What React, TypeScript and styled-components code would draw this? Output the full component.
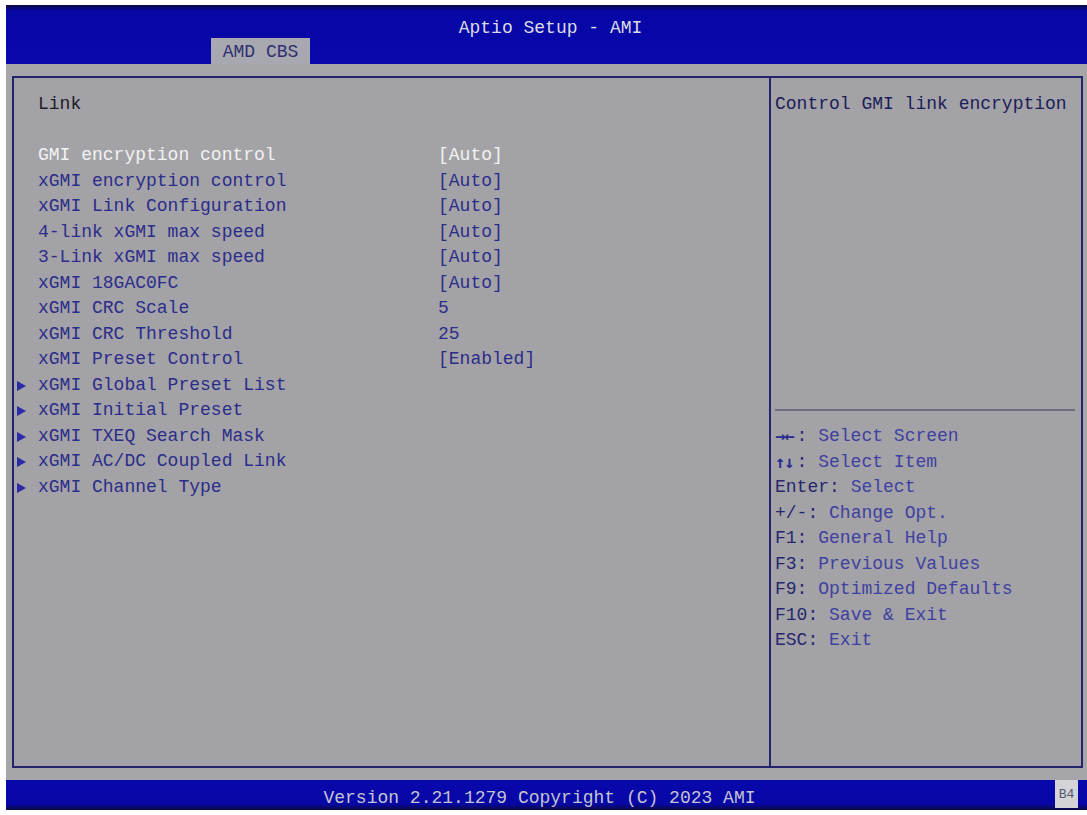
import React from "react";
import styled, { createGlobalStyle } from "styled-components";

const items = [
  { label: "GMI encryption control", value: "[Auto]", selected: true },
  { label: "xGMI encryption control", value: "[Auto]" },
  { label: "xGMI Link Configuration", value: "[Auto]" },
  { label: "4-link xGMI max speed", value: "[Auto]" },
  { label: "3-Link xGMI max speed", value: "[Auto]" },
  { label: "xGMI 18GAC0FC", value: "[Auto]" },
  { label: "xGMI CRC Scale", value: "5" },
  { label: "xGMI CRC Threshold", value: "25" },
  { label: "xGMI Preset Control", value: "[Enabled]" },
  { label: "xGMI Global Preset List", sub: true },
  { label: "xGMI Initial Preset", sub: true },
  { label: "xGMI TXEQ Search Mask", sub: true },
  { label: "xGMI AC/DC Coupled Link", sub: true },
  { label: "xGMI Channel Type", sub: true },
];

// arrows are drawn in a separate font, the others are plain text
const keys = [
  { k: "→←", d: "Select Screen", glyph: true },
  { k: "↑↓", d: "Select Item", glyph: true },
  { k: "Enter", d: "Select" },
  { k: "+/-", d: "Change Opt." },
  { k: "F1", d: "General Help" },
  { k: "F3", d: "Previous Values" },
  { k: "F9", d: "Optimized Defaults" },
  { k: "F10", d: "Save & Exit" },
  { k: "ESC", d: "Exit" },
];

const App = () => {
  return (
    <>
      <GlobalStyle />
      <Screen>
        <TopBar>
          <Title>Aptio Setup - AMI</Title>
          <TabRow>
            <Tab>AMD CBS</Tab>
          </TabRow>
        </TopBar>
        <Middle>
          <Panel>
            <MainPane>
              <Heading>Link</Heading>
              <Blank />
              {items.map((it) => (
                <Row key={it.label} $selected={it.selected}>
                  {it.sub && <Arrow />}
                  <Label>{it.label}</Label>
                  {it.value && <Value>{it.value}</Value>}
                </Row>
              ))}
            </MainPane>
            <HelpPane>
              <HelpText>Control GMI link encryption</HelpText>
              <Separator />
              <KeyList>
                {keys.map((it) => (
                  <KeyLine key={it.k}>
                    <KeyName $glyph={it.glyph}>{it.k}</KeyName>
                    <KeyName>:</KeyName> {it.d}
                  </KeyLine>
                ))}
              </KeyList>
            </HelpPane>
          </Panel>
        </Middle>
        <Footer>
          <FooterText>Version 2.21.1279 Copyright (C) 2023 AMI</FooterText>
          <Code>B4</Code>
        </Footer>
      </Screen>
    </>
  );
};

const GlobalStyle = createGlobalStyle`
  html, body {
    margin: 0;
    padding: 0;
    background: #ffffff;
  }
  body {
    font-family: "Liberation Mono", "DejaVu Sans Mono", monospace;
    font-size: 18px;
  }
`;

const Screen = styled.div`
  margin: 5px 0 5px 6px;
  width: 1081px;
  height: 805px;
  display: flex;
  flex-direction: column;
  background: #a6a6aa;
`;

const TopBar = styled.div`
  height: 59px;
  display: flex;
  flex-direction: column;
  background: linear-gradient(#0a0a40 0px, #0707a6 6px, #0808ac 100%);
`;

const Title = styled.div`
  height: 22px;
  padding-top: 11px;
  line-height: 24px;
  text-align: center;
  color: #dcdce4;
  padding-left: 8px;
`;

const TabRow = styled.div`
  flex: 1;
  display: flex;
  align-items: flex-end;
  padding-left: 205px;
`;

const Tab = styled.div`
  width: 99px;
  height: 26px;
  line-height: 28px;
  text-align: center;
  background: #a8a8b0;
  color: #303070;
`;

const Middle = styled.div`
  flex: 1;
  padding: 12px 4px 12px 6px;
  display: flex;
`;

const Panel = styled.div`
  flex: 1;
  display: grid;
  grid-template-columns: 755px 1fr;
  border: 2px solid #24246e;
  background: #a3a3a7;
`;

const MainPane = styled.div`
  padding: 14px 0 0 24px;
  line-height: 25.5px;
`;

const Heading = styled.div`
  color: #202028;
`;

const Blank = styled.div`
  height: 25.5px;
`;

const Row = styled.div<{ $selected?: boolean }>`
  position: relative;
  display: flex;
  color: ${(p) => (p.$selected ? "#f2f2f2" : "#2c2c8a")};
`;

const Arrow = styled.span`
  position: absolute;
  left: -21px;
  top: 8px;
  width: 0;
  height: 0;
  border-top: 5px solid transparent;
  border-bottom: 5px solid transparent;
  border-left: 9px solid #2a2aa8;
`;

const Label = styled.span`
  width: 400px;
  white-space: pre;
`;

const Value = styled.span`
  white-space: pre;
`;

const HelpPane = styled.div`
  border-left: 2px solid #24246e;
  padding: 14px 4px 0 4px;
  display: flex;
  flex-direction: column;
  line-height: 25.5px;
`;

const HelpText = styled.div`
  height: 317px;
  color: #1c1c58;
  white-space: pre;
`;

const Separator = styled.div`
  height: 2px;
  background: #6e6e80;
  margin-right: 2px;
`;

const KeyList = styled.div`
  padding-top: 13px;
  color: #4040a0;
`;

const KeyLine = styled.div`
  white-space: pre;
`;

const KeyName = styled.span<{ $glyph?: boolean }>`
  color: #26266e;
  ${(p) =>
    p.$glyph &&
    `
    display: inline-block;
    width: 21.6px;
    overflow: hidden;
    vertical-align: top;
    font-family: "DejaVu Sans Mono", monospace;
    font-size: 17px;
    font-weight: bold;
    letter-spacing: -1px;
    color: #2a2a90;
  `}
`;

const Footer = styled.div`
  height: 30px;
  display: flex;
  align-items: stretch;
  background: linear-gradient(#0808ac 0px, #0707a6 24px, #0a0a40 30px);
`;

const FooterText = styled.div`
  flex: 1;
  text-align: center;
  line-height: 30px;
  padding-top: 3px;
  color: #c4c4d0;
  padding-left: 18px;
`;

const Code = styled.div`
  width: 23px;
  margin-right: 9px;
  margin-bottom: 2px;
  background: #d4d4d8;
  color: #555570;
  font-size: 13px;
  line-height: 30px;
  text-align: center;
`;

export default App;
